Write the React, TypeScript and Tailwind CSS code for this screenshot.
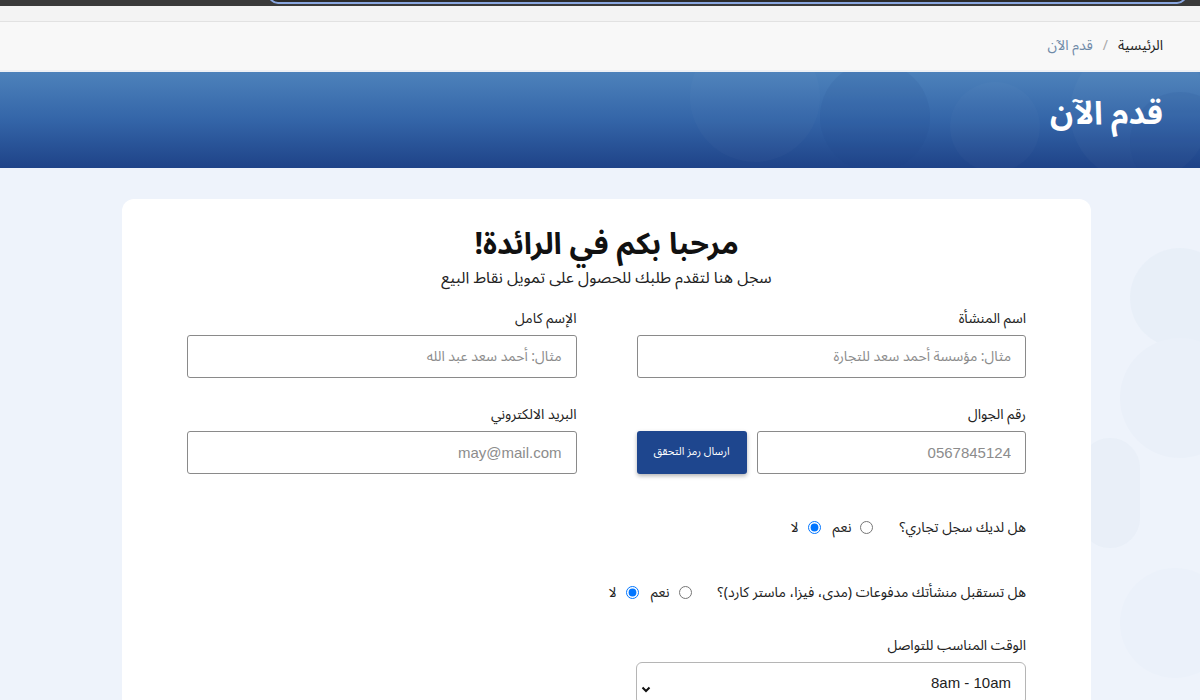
import { useState } from 'react';

const AR = { fontFamily: '"Noto Sans Arabic", "DejaVu Sans", "Liberation Sans", sans-serif' };

function Field({ label, placeholder }: { label: string; placeholder: string }) {
  return (
    <div className="flex flex-col">
      <label className="text-[14px] text-[#222] mb-[6px] leading-[20px]">{label}</label>
      <input
        placeholder={placeholder}
        className="h-[43px] w-full border border-[#8a8a8a] rounded-[3px] px-[14px] text-[14px] placeholder:text-[#8c8c8c] outline-none bg-white"
      />
    </div>
  );
}

function RadioQ({ q, name }: { q: string; name: string }) {
  const [val, setVal] = useState('no');
  return (
    <div className="flex items-center gap-[12px] text-[14px] text-[#222]">
      <span>{q}</span>
      <label className="flex items-center gap-[9px] mr-[14px]">
        <input type="radio" name={name} checked={val === 'yes'} onChange={() => setVal('yes')} className="w-[13px] h-[13px]" />
        <span>نعم</span>
      </label>
      <label className="flex items-center gap-[9px]">
        <input type="radio" name={name} checked={val === 'no'} onChange={() => setVal('no')} className="w-[13px] h-[13px] accent-[#0075ff]" />
        <span>لا</span>
      </label>
    </div>
  );
}

export default function App() {
  return (
    <div dir="rtl" style={AR} className="w-[1200px] min-h-[700px] bg-[#eef3fb] overflow-hidden">
      {/* browser chrome remnant */}
      <div className="h-[6px] bg-[#3a3a3a] relative overflow-hidden" dir="ltr">
        <div className="absolute left-[268px] right-[13px] top-[-20px] h-[24px] rounded-[10px] border-2 border-[#8aa7e0] bg-[#2a2a2a]" />
      </div>
      <div className="h-[16px] bg-[#f3f3f3] border-b border-[#e2e2e2]" />

      {/* breadcrumb */}
      <div className="h-[50px] bg-[#f8f8f8] border-b-2 border-[#eef1f5] flex items-center pr-[37px] text-[14px] pb-[2px]">
        <span className="text-[#222]">الرئيسية</span>
        <span className="text-[#aaa] mx-[10px]">/</span>
        <span className="text-[#6f8aa8]">قدم الآن</span>
      </div>

      {/* hero */}
      <div className="relative h-[96px] bg-gradient-to-b from-[#4d82bb] via-[#3465a8] to-[#1f4388] overflow-hidden flex items-center pr-[37px]">
        <div className="absolute left-[690px] top-[-40px] w-[130px] h-[130px] rounded-full bg-white/[0.02]" />
        <div className="absolute left-[820px] top-[-10px] w-[110px] h-[110px] rounded-full bg-[#1f4388]/10" />
        <div className="absolute left-[950px] top-[10px] w-[90px] h-[90px] rounded-full bg-white/[0.02]" />
        <div className="absolute left-[1070px] top-[-30px] w-[140px] h-[140px] rounded-full bg-white/[0.025]" />
        <div className="absolute left-[1130px] top-[20px] w-[100px] h-[100px] rounded-full bg-[#1f4388]/10" />
        <h1 className="relative text-white text-[32px] font-bold leading-none pb-[12px]">قدم الآن</h1>
      </div>

      {/* body */}
      <div className="relative pt-[31px]">
        <div className="absolute right-[-30px] top-[80px] w-[100px] h-[100px] rounded-full bg-[#e5ecf6]/60" />
        <div className="absolute right-[-40px] top-[170px] w-[120px] h-[120px] rounded-full bg-[#eaf0f9]" />
        <div className="absolute right-[60px] top-[270px] w-[60px] h-[110px] rounded-full bg-[#e4ebf5]/50" />
        <div className="absolute right-[-30px] top-[400px] w-[110px] h-[110px] rounded-full bg-[#ebf1fa]" />

        <div className="relative mr-[109px] w-[969px] bg-white rounded-[12px] px-[65px] pt-[27px] pb-[40px]">
          <div className="text-center">
            <h2 className="text-[30px] font-bold text-[#111] leading-[38px]">مرحبا بكم في الرائدة!</h2>
            <p className="text-[16px] text-[#222] leading-[22px] mt-[3px]">سجل هنا لتقدم طلبك للحصول على تمويل نقاط البيع</p>
          </div>

          <div className="grid grid-cols-2 gap-x-[60px] gap-y-[27px] mt-[20px]">
            <Field label="اسم المنشأة" placeholder="مثال: مؤسسة أحمد سعد للتجارة" />
            <Field label="الإسم كامل" placeholder="مثال: أحمد سعد عبد الله" />
            <div className="flex flex-col">
              <label className="text-[14px] text-[#222] mb-[6px] leading-[20px]">رقم الجوال</label>
              <div className="flex gap-[10px]">
                <input
                  placeholder="0567845124"
                  className="h-[43px] flex-1 border border-[#8a8a8a] rounded-[3px] px-[14px] text-[15px] placeholder:text-[#8c8c8c] outline-none"
                  style={{ fontFamily: '"Liberation Sans", Arial, sans-serif' }}
                />
                <button className="w-[110px] h-[43px] bg-[#1e468e] text-white text-[11px] rounded-[3px] shadow-[0_2px_4px_rgba(0,0,0,0.3)]">
                  ارسال رمز التحقق
                </button>
              </div>
            </div>
            <div className="flex flex-col">
              <label className="text-[14px] text-[#222] mb-[6px] leading-[20px]">البريد الالكتروني</label>
              <input
                placeholder="may@mail.com"
                className="h-[43px] w-full border border-[#8a8a8a] rounded-[3px] px-[14px] text-[15px] placeholder:text-[#8c8c8c] outline-none"
                style={{ fontFamily: '"Liberation Sans", Arial, sans-serif' }}
              />
            </div>
          </div>

          <div className="mt-[43px]">
            <RadioQ q="هل لديك سجل تجاري؟" name="cr" />
          </div>
          <div className="mt-[44px]">
            <RadioQ q="هل تستقبل منشأتك مدفوعات (مدى، فيزا، ماستر كارد)؟" name="pay" />
          </div>

          <div className="mt-[33px] w-[390px] flex flex-col">
            <label className="text-[14px] text-[#222] mb-[6px] leading-[20px]">الوقت المناسب للتواصل</label>
            <div className="relative">
              <select
                className="appearance-none w-full h-[43px] border border-[#b5b5b5] rounded-[6px] px-[14px] text-[15px] text-[#222] bg-white outline-none"
                style={{ fontFamily: '"Liberation Sans", Arial, sans-serif' }}
              >
                <option>8am - 10am</option>
                <option>10am - 12pm</option>
              </select>
              <svg className="absolute left-[5px] top-[22px] w-[10px] h-[10px] pointer-events-none" viewBox="0 0 10 10" fill="none" stroke="#111" strokeWidth="2">
                <path d="M1.5 3.5 L5 7 L8.5 3.5" />
              </svg>
            </div>
          </div>
        </div>
      </div>
    </div>
  );
}
